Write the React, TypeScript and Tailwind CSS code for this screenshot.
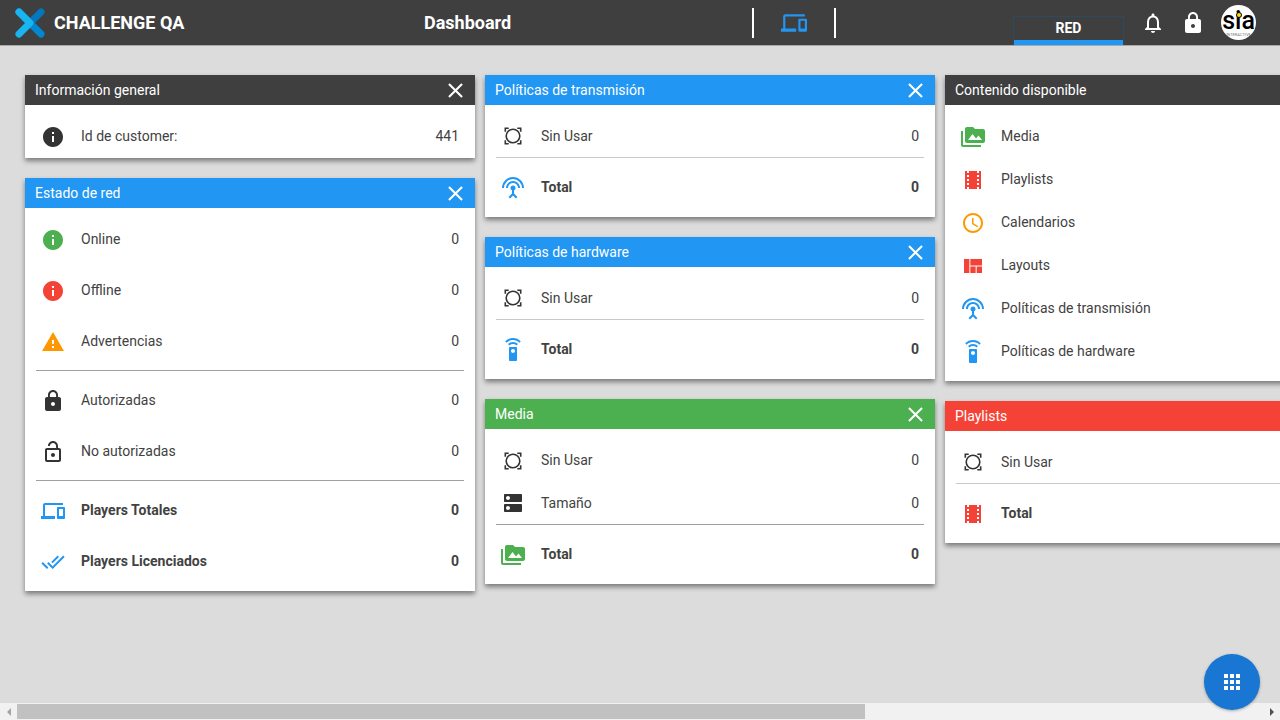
import type {ReactNode} from 'react';
import {
  MdAccessTime,
  MdApps,
  MdClose,
  MdDevices,
  MdDns,
  MdDoneAll,
  MdInfo,
  MdLocalMovies,
  MdLock,
  MdLockOpen,
  MdNotificationsNone,
  MdPermMedia,
  MdSettingsInputAntenna,
  MdSettingsRemote,
  MdViewQuilt,
  MdWarning,
} from 'react-icons/md';

function UnusedIcon() {
  return (
    <svg viewBox="0 0 24 24" width={24} height={24} className="text-[#333]">
      <circle cx="12" cy="12" r="6.8" fill="none" stroke="currentColor" strokeWidth="1.6" />
      <path fill="currentColor" d="M3.5 3.5h4.2v1.6H5.1v2.6H3.5zM16.3 3.5h4.2v4.2h-1.6V5.1h-2.6zM3.5 16.3h1.6v2.6h2.6v1.6H3.5zM18.9 16.3h1.6v4.2h-4.2v-1.6h2.6z" />
    </svg>
  );
}

function Logo() {
  return (
    <svg viewBox="0 0 30 30" width={30} height={30}>
      <path d="M4 4 L26 26" stroke="#0288d1" strokeWidth="7" strokeLinecap="round" />
      <path d="M26 4 L15 15" stroke="#0277bd" strokeWidth="7" strokeLinecap="round" />
      <path d="M4 4 L15 15 L4 26" fill="none" stroke="#18b5f0" strokeWidth="7" strokeLinecap="round" strokeLinejoin="round" />
    </svg>
  );
}

function Avatar() {
  return (
    <div className="relative flex h-[35px] w-[35px] items-center justify-center overflow-hidden rounded-full bg-white">
      <span className="mt-[-5px] text-[25px] font-medium leading-none text-black">sia</span>
      <span className="absolute left-[15px] top-[7px] h-[6px] w-[6px] rounded-full border border-black bg-[#f5e10f]" />
      <span className="absolute top-[28px] text-[4px] leading-none text-[#777]">INTERACTIVE</span>
    </div>
  );
}

function TopBar() {
  return (
    <header className="flex h-[46px] shrink-0 items-center border-b border-[#a8a8a8] bg-[#3f3f3f] text-white">
      <div className="ml-[15px] flex w-[409px] items-center gap-[9px]">
        <Logo />
        <span className="text-[18px] font-bold leading-none">CHALLENGE QA</span>
      </div>
      <span className="w-[328px] text-[18px] font-bold leading-none">Dashboard</span>
      <div className="flex h-[30px] w-[84px] items-center justify-center border-x-2 border-white">
        <MdDevices size={26} className="text-[#2196f3]" />
      </div>
      <div className="ml-[177px] flex h-[29px] w-[111px] flex-col self-end border border-b-0 border-[#2c4a60]">
        <span className="flex-1 pt-[2px] text-center text-[14px] font-bold leading-[18px]">RED</span>
        <span className="h-[5px] bg-[#2196f3]" />
      </div>
      <MdNotificationsNone size={24} className="ml-[17px]" />
      <MdLock size={24} className="ml-[16px]" />
      <div className="ml-[16px]">
        <Avatar />
      </div>
    </header>
  );
}

interface RowProps {
  icon: ReactNode;
  label: string;
  value?: string;
  bold?: boolean;
  height?: string;
}

function Row({icon, label, value, bold, height = 'h-[43px]'}: RowProps) {
  return (
    <div className={`flex items-center pl-4 pr-4 text-[14px] text-[#424242] ${height} ${bold ? 'font-bold text-[#333]' : ''}`}>
      <span className="mr-4 flex h-6 w-6 shrink-0 items-center justify-center">{icon}</span>
      <span className="flex-1">{label}</span>
      {value !== undefined && <span>{value}</span>}
    </div>
  );
}

function Divider({dark}: {dark?: boolean}) {
  return <div className={`mx-[11px] h-px ${dark ? 'bg-[#a0a0a0]' : 'bg-[#c8c8c8]'}`} />;
}

interface CardProps {
  title: string;
  color: string;
  children: ReactNode;
  padding?: string;
}

function Card({title, color, children, padding = 'pt-[10px] pb-[4px]'}: CardProps) {
  return (
    <section className="w-[450px] bg-white shadow-[0_3px_5px_rgba(0,0,0,0.45)]">
      <div className={`flex h-[30px] items-center justify-between pl-[10px] pr-[7px] text-[14px] text-white ${color}`}>
        <span>{title}</span>
        <MdClose size={25} />
      </div>
      <div className={padding}>{children}</div>
    </section>
  );
}

const tall = 'h-[51px]';
const short = 'h-[42px]';
const unused = <UnusedIcon />;
const antenna = <MdSettingsInputAntenna size={24} className="text-[#2196f3]" />;
const remote = <MdSettingsRemote size={24} className="text-[#2196f3]" />;
const media = <MdPermMedia size={24} className="text-[#4caf50]" />;
const movies = <MdLocalMovies size={24} className="text-[#f44336]" />;

function LeftColumn() {
  return (
    <div className="flex flex-col gap-[20px]">
      <Card title="Información general" color="bg-[#3f3f3f]" padding="pt-[10px]">
        <Row icon={<MdInfo size={24} className="text-[#333]" />} label="Id de customer:" value="441" />
      </Card>
      <Card title="Estado de red" color="bg-[#2196f3]" padding="pt-[6px] pb-[4px]">
        <Row height={tall} icon={<MdInfo size={24} className="text-[#4caf50]" />} label="Online" value="0" />
        <Row height={tall} icon={<MdInfo size={24} className="text-[#f44336]" />} label="Offline" value="0" />
        <Row height={tall} icon={<MdWarning size={24} className="text-[#ff9800]" />} label="Advertencias" value="0" />
        <div className="mb-[4px] mt-[3px]">
          <Divider dark />
        </div>
        <Row height={tall} icon={<MdLock size={24} className="text-[#333]" />} label="Autorizadas" value="0" />
        <Row height={tall} icon={<MdLockOpen size={24} className="text-[#333]" />} label="No autorizadas" value="0" />
        <div className="mb-[4px] mt-[3px]">
          <Divider dark />
        </div>
        <Row height={tall} bold icon={<MdDevices size={24} className="text-[#2196f3]" />} label="Players Totales" value="0" />
        <Row height={tall} bold icon={<MdDoneAll size={24} className="text-[#2196f3]" />} label="Players Licenciados" value="0" />
      </Card>
    </div>
  );
}

function MiddleColumn() {
  return (
    <div className="flex flex-col gap-[20px]">
      <Card title="Políticas de transmisión" color="bg-[#2196f3]">
        <Row height={short} icon={unused} label="Sin Usar" value="0" />
        <Divider />
        <div className="pt-[4px]">
          <Row height={tall} bold icon={antenna} label="Total" value="0" />
        </div>
      </Card>
      <Card title="Políticas de hardware" color="bg-[#2196f3]">
        <Row height={short} icon={unused} label="Sin Usar" value="0" />
        <Divider />
        <div className="pt-[4px]">
          <Row height={tall} bold icon={remote} label="Total" value="0" />
        </div>
      </Card>
      <Card title="Media" color="bg-[#4caf50]">
        <Row icon={unused} label="Sin Usar" value="0" />
        <Row height={short} icon={<MdDns size={24} className="text-[#333]" />} label="Tamaño" value="0" />
        <Divider dark />
        <div className="pt-[4px]">
          <Row height={tall} bold icon={media} label="Total" value="0" />
        </div>
      </Card>
    </div>
  );
}

function RightColumn() {
  return (
    <div className="flex flex-col gap-[20px]">
      <Card title="Contenido disponible" color="bg-[#3f3f3f]" padding="pt-[10px] pb-[8px]">
        <Row icon={media} label="Media" />
        <Row icon={movies} label="Playlists" />
        <Row icon={<MdAccessTime size={24} className="text-[#ff9800]" />} label="Calendarios" />
        <Row icon={<MdViewQuilt size={24} className="text-[#f44336]" />} label="Layouts" />
        <Row icon={antenna} label="Políticas de transmisión" />
        <Row icon={remote} label="Políticas de hardware" />
      </Card>
      <Card title="Playlists" color="bg-[#f44336]">
        <Row height={short} icon={unused} label="Sin Usar" value="0" />
        <Divider />
        <div className="pt-[4px]">
          <Row height={tall} bold icon={movies} label="Total" value="0" />
        </div>
      </Card>
    </div>
  );
}

function Scrollbar() {
  return (
    <div className="absolute bottom-0 left-0 flex h-[17px] w-full items-center bg-[#f1f1f1]">
      <span className="flex w-[17px] justify-center">
        <span className="h-0 w-0 border-y-[4px] border-r-[4px] border-y-transparent border-r-[#a3a3a3]" />
      </span>
      <span className="h-[15px] w-[848px] bg-[#c1c1c1]" />
      <span className="ml-auto flex w-[17px] justify-center">
        <span className="h-0 w-0 border-y-[4px] border-l-[4px] border-y-transparent border-l-[#505050]" />
      </span>
    </div>
  );
}

export default function App() {
  return (
    <div className="relative flex h-[720px] w-[1280px] flex-col overflow-hidden bg-[#dcdcdc] font-['Roboto',sans-serif]">
      <TopBar />
      <main className="flex items-start gap-[10px] pl-[25px] pt-[29px]">
        <LeftColumn />
        <MiddleColumn />
        <RightColumn />
      </main>
      <Scrollbar />
      <button className="absolute bottom-[10px] right-[20px] flex h-[56px] w-[56px] items-center justify-center rounded-full bg-[#1976d2] text-white shadow-[0_1px_3px_rgba(0,0,0,0.3)]">
        <MdApps size={24} />
      </button>
    </div>
  );
}
